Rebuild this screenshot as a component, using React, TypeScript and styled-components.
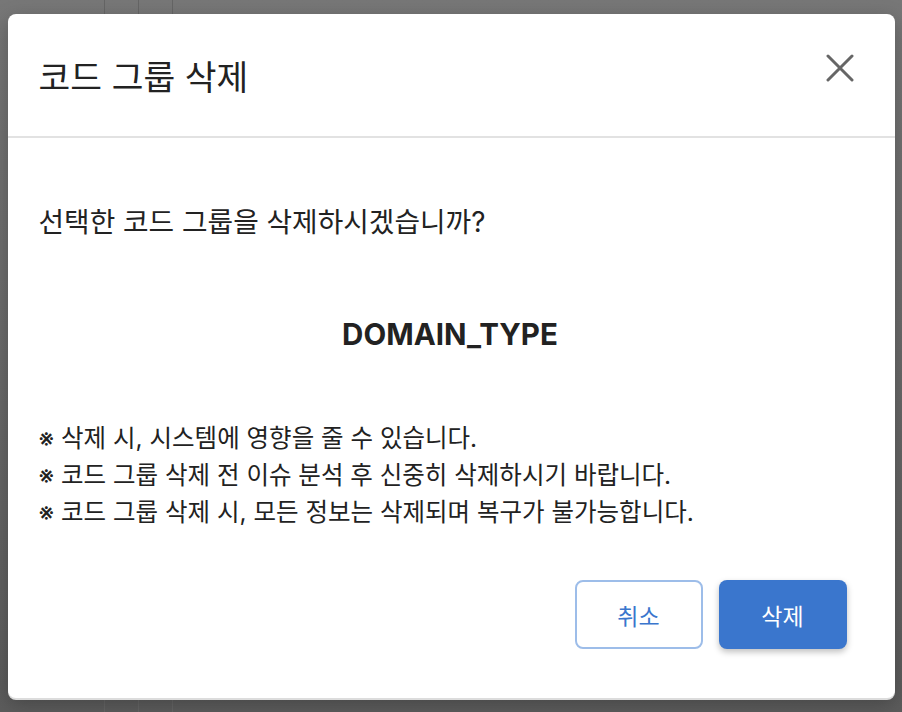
import React from 'react';
import styled, { createGlobalStyle } from 'styled-components';

const GlobalStyle = createGlobalStyle`
    html, body {
        margin: 0;
        padding: 0;
    }
    body {
        font-family: Inter, "Noto Sans CJK KR", sans-serif;
        color: #222;
    }
`;

const Screen = styled.div`
    width: 902px;
    height: 712px;
    display: flex;
    align-items: center;
    justify-content: center;
    background-color: #6c6c6c;
    background-image:
        linear-gradient(to right, transparent 104px, #656565 104px, #656565 105px, transparent 105px,
            transparent 138px, #656565 138px, #656565 139px, transparent 139px,
            transparent 172px, #656565 172px, #656565 173px, transparent 173px),
        linear-gradient(to bottom, #777 0%, #6a6a6a 50%, #5c5c5c 100%);
`;

const Modal = styled.div`
    width: 887px;
    height: 684px;
    display: flex;
    flex-direction: column;
    background: #fff;
    border-radius: 8px;
    box-shadow: 0 2px 0 #dcdcdc, 0 6px 20px rgba(0, 0, 0, 0.25);
    overflow: hidden;
`;

const Header = styled.div`
    height: 122px;
    display: flex;
    align-items: center;
    justify-content: space-between;
    padding: 0 40px 0 31px;
    border-bottom: 2px solid #e2e2e2;
`;

const Title = styled.h2`
    margin: 0;
    font-size: 34.5px;
    font-weight: 400;
    color: #222;
`;

const CloseButton = styled.button`
    width: 30px;
    height: 30px;
    margin-top: -14px;
    padding: 0;
    border: none;
    background: none;
    display: flex;
    align-items: center;
    justify-content: center;
    cursor: pointer;
`;

const Body = styled.div`
    flex: 1;
    display: flex;
    flex-direction: column;
    padding: 66px 33px 49px 31px;
`;

const Question = styled.p`
    margin: 0;
    font-size: 27.8px;
    line-height: 36px;
    color: #222;
`;

const TargetName = styled.p`
    margin: 73px 0 0;
    text-align: center;
    font-size: 29.5px;
    line-height: 42px;
    font-weight: 700;
    color: #222;
`;

const Notes = styled.ul`
    margin: 65px 0 0;
    padding: 0;
    list-style: none;
`;

const Note = styled.li`
    font-size: 24.5px;
    line-height: 37px;
    color: #222;
`;

const Footer = styled.div`
    margin-top: auto;
    padding-right: 15px;
    display: flex;
    justify-content: flex-end;
    gap: 16px;
`;

const Button = styled.button<{ $primary?: boolean }>`
    width: 128px;
    height: 69px;
    border-radius: 8px;
    font-family: inherit;
    font-size: 23px;
    cursor: pointer;
    border: ${p => p.$primary ? 'none' : '2px solid #9dbde9'};
    background: ${p => p.$primary ? '#3a76cd' : '#fff'};
    color: ${p => p.$primary ? '#fff' : '#3a76cd'};
    box-shadow: ${p => p.$primary ? '0 3px 6px rgba(0, 0, 0, 0.25)' : 'none'};
`;

const notes = [
    '※ 삭제 시, 시스템에 영향을 줄 수 있습니다.',
    '※ 코드 그룹 삭제 전 이슈 분석 후 신중히 삭제하시기 바랍니다.',
    '※ 코드 그룹 삭제 시, 모든 정보는 삭제되며 복구가 불가능합니다.',
];

export default function App() {
    return (
        <>
            <GlobalStyle />
            <Screen>
                <Modal>
                    <Header>
                        <Title>코드 그룹 삭제</Title>
                        <CloseButton aria-label="닫기">
                            <svg width="28" height="28" viewBox="0 0 28 28">
                                <path d="M2 2 L26 26 M26 2 L2 26" stroke="#666" strokeWidth="3" strokeLinecap="round" />
                            </svg>
                        </CloseButton>
                    </Header>
                    <Body>
                        <Question>선택한 코드 그룹을 삭제하시겠습니까?</Question>
                        <TargetName>DOMAIN_TYPE</TargetName>
                        <Notes>
                            {notes.map(n => <Note key={n}>{n}</Note>)}
                        </Notes>
                        <Footer>
                            <Button>취소</Button>
                            <Button $primary>삭제</Button>
                        </Footer>
                    </Body>
                </Modal>
            </Screen>
        </>
    );
}
